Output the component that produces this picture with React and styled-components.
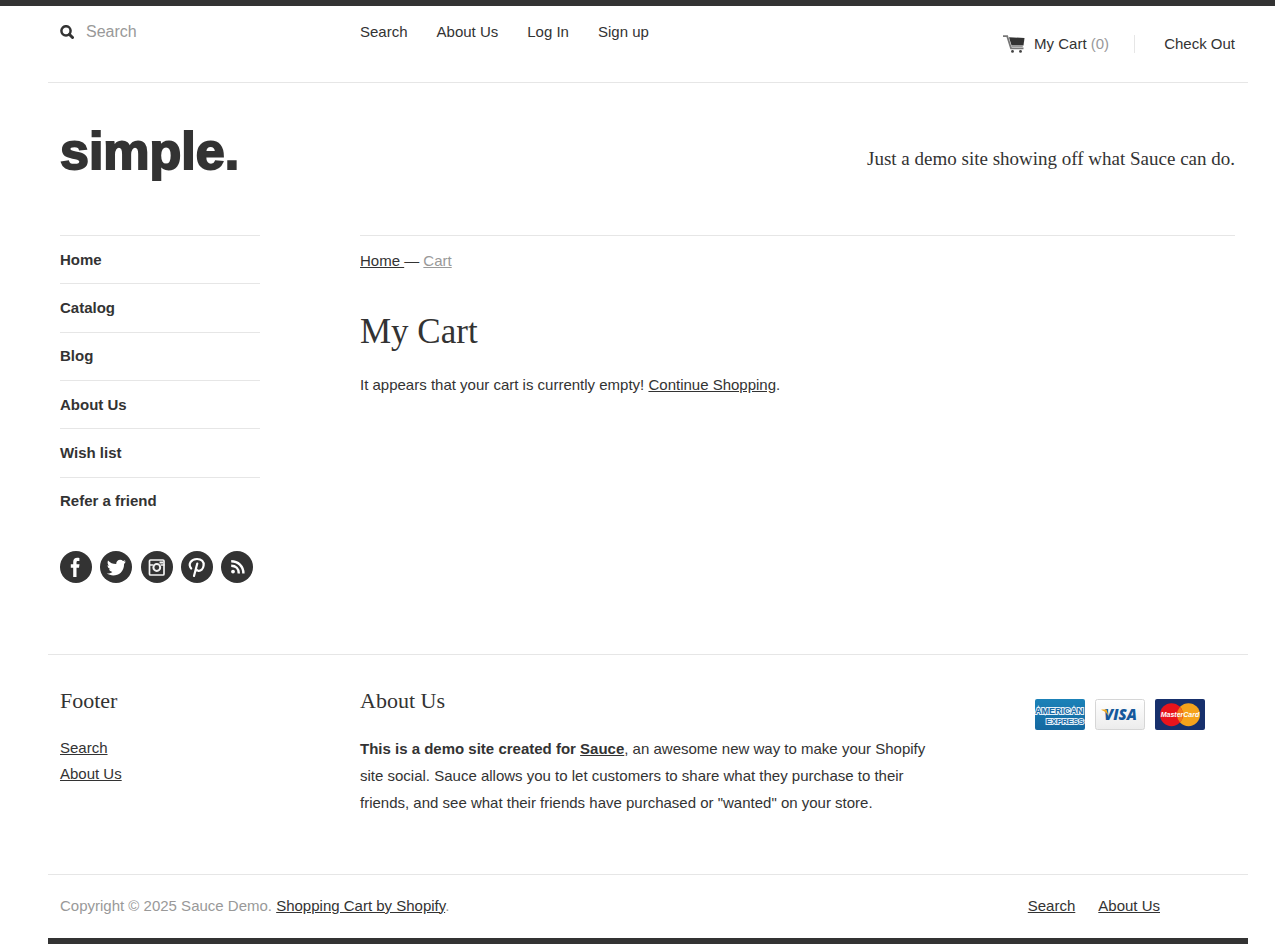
import React from 'react';
import styled, { createGlobalStyle } from 'styled-components';

const dark = '#333';
const muted = '#999';
const rule = '#e6e6e6';
const sans = '"Liberation Sans", Arial, sans-serif';
const serif = '"Liberation Serif", "Times New Roman", serif';

const GlobalStyle = createGlobalStyle`
  *, *::before, *::after { box-sizing: border-box; }
  body {
    margin: 0;
    background: #fff;
    color: ${dark};
    font: 15px/20px ${sans};
    border-top: 6px solid ${dark};
  }
  h1, h2, p, ul { margin: 0; padding: 0; font-weight: normal; }
  ul { list-style: none; }
`;

const Page = styled.div`
  padding: 0 27px 0 48px;
`;

const TopBar = styled.div`
  display: grid;
  grid-template-columns: 300px 1fr auto;
  align-items: start;
  min-height: 77px;
  padding: 16px 13px 0 12px;
  border-bottom: 1px solid ${rule};
`;

const SearchForm = styled.form`
  display: flex;
  align-items: center;
  gap: 12px;
`;

const IconButton = styled.button`
  display: block;
  width: 14px;
  height: 14px;
  padding: 0;
  border: 0;
  background: none;
  cursor: pointer;
  svg { display: block; }
`;

const SearchInput = styled.input`
  width: 160px;
  height: 20px;
  padding: 0;
  border: 0;
  outline: 0;
  background: none;
  color: ${dark};
  font: 16px/20px ${sans};
  &::placeholder { color: ${muted}; opacity: 1; }
`;

const TopNav = styled.nav`
  display: flex;
  gap: 29px;
`;

const Link = styled.a`
  color: ${(p) => (p.$muted ? muted : dark)};
  text-decoration: ${(p) => (p.$plain ? 'none' : 'underline')};
`;

const CartLinks = styled.div`
  display: flex;
  align-items: center;
  padding-top: 12px;
`;

const CartLink = styled(Link)`
  display: flex;
  align-items: center;
  gap: 9px;
  svg { display: block; }
`;

const Count = styled.span`
  color: ${muted};
`;

const Divider = styled.span`
  width: 1px;
  height: 18px;
  margin: 0 29px 0 25px;
  background: ${rule};
`;

const Masthead = styled.header`
  display: flex;
  align-items: center;
  justify-content: space-between;
  min-height: 152px;
  padding: 0 13px 0 12px;
`;

const Logo = styled.a`
  color: ${dark};
  font: bold 52px/64px ${sans};
  -webkit-text-stroke: 2px ${dark};
  text-decoration: none;
  padding-bottom: 16px;
`;

const Tagline = styled.p`
  font: 19px/24px ${serif};
`;

const Columns = styled.div`
  display: grid;
  grid-template-columns: 200px 1fr;
  column-gap: 100px;
  padding: 0 13px 71px 12px;
`;

const SideNav = styled.ul`
  display: grid;
  grid-auto-rows: 1fr;
  min-height: 290px;
`;

const SideItem = styled.li`
  display: flex;
  align-items: center;
  border-top: 1px solid ${rule};
  font-weight: bold;
`;

const Social = styled.div`
  display: flex;
  justify-content: space-between;
  width: 193px;
  margin-top: 26px;
  svg { display: block; }
`;

const Main = styled.main`
  padding-top: 15px;
  border-top: 1px solid ${rule};
`;

const Title = styled.h1`
  margin: 41px 0 23px;
  font: 35px/40px ${serif};
`;

const Footer = styled.footer`
  border-top: 1px solid ${rule};
  border-bottom: 6px solid ${dark};
`;

const FooterColumns = styled.div`
  display: grid;
  grid-template-columns: 300px 1fr 200px;
  padding: 33px 13px 58px 12px;
  border-bottom: 1px solid ${rule};
`;

const FooterTitle = styled.h2`
  margin-bottom: 21px;
  font: 22px/26px ${serif};
`;

const FooterList = styled.ul`
  line-height: 26px;
`;

const About = styled.section`
  padding-right: 100px;
`;

const AboutText = styled.p`
  line-height: 27px;
`;

const Cards = styled.div`
  display: flex;
  gap: 10px;
  padding-top: 11px;
  svg { display: block; }
`;

const Bottom = styled.div`
  display: flex;
  align-items: center;
  justify-content: space-between;
  min-height: 63px;
  padding: 0 88px 2px 12px;
  color: ${muted};
`;

const BottomNav = styled.nav`
  display: flex;
  gap: 23px;
`;

const socials = [
  {
    name: 'Facebook',
    art: <path fill="#fff" d="M13.200 26v-9.300h-2.400v-3.400h2.400v-2.500c0-2.700 1.600-4.100 4-4.100 1 0 2 .1 2.200.2v3.200h-1.500c-1.200 0-1.400.6-1.400 1.400v1.800h3l-.5 3.400h-2.500V26z" />,
  },
  {
    name: 'Twitter',
    art: <path fill="#fff" d="M25.800 10.500l-2 .6c.8-.5 1.200-1 1.500-1.900l-2.300.8c-.8-.8-1.700-1.200-2.800-1.200-2.300 0-4 1.900-4 4.200-3.500 0-6-1.300-8.200-3.600-.8 2-.4 4 1.100 5.300l-1.600-.4c0 1.900 1.200 3.400 3 3.900l-1.600.1c.6 1.500 1.900 2.500 3.500 2.600-1.700 1.300-3.500 1.800-5.600 1.700 6.700 4.200 17.300 1.200 17.300-9.700.7-.6 1.300-1.400 1.700-2.400z" />,
  },
  {
    name: 'Instagram',
    art: (
      <g fill="none" stroke="#f2f2f2">
        <rect x="8.500" y="9" width="14.500" height="15" rx="1" strokeWidth="1.700" />
        <path d="M8.500 14h4m7 0h4" strokeWidth="1.500" />
        <circle cx="15.800" cy="16.500" r="3.400" strokeWidth="2" />
        <path d="M18.500 11.500h3.500" strokeWidth="2" />
      </g>
    ),
  },
  {
    name: 'Pinterest',
    art: (
      <path
        fill="none"
        stroke="#fff"
        strokeWidth="2.200"
        strokeLinecap="round"
        strokeLinejoin="round"
        d="M10.200 17.500c-3.600-4.500-.1-9.500 5.800-9.500 4.500 0 7.200 2.700 6.600 6.500-.5 3.700-2.900 5.600-5.200 5.300-1.300-.2-2-.9-2.400-1.700M16.300 12.500L13 25"
      />
    ),
  },
  {
    name: 'RSS',
    art: (
      <g fill="none" stroke="#fff" strokeWidth="2.400">
        <circle cx="12" cy="20.600" r="1.900" fill="#fff" stroke="none" />
        <path d="M10.200 14.800c4.600 0 7.600 3 7.600 7.600M10.200 10.300c7 0 12.200 5.100 12.200 12.100" />
      </g>
    ),
  },
];

const SearchIcon = () => (
  <svg width="14" height="14" viewBox="0 0 14 14" fill="none" stroke={dark} aria-hidden="true">
    <circle cx="6" cy="5.800" r="4.600" strokeWidth="2.500" />
    <path d="M9.500 9.500l3 3" strokeWidth="3" strokeLinecap="round" />
  </svg>
);

const CartIcon = () => (
  <svg width="22" height="18" viewBox="0 0 22 18" aria-hidden="true">
    <path d="M0 1.200h4.200L8 13.300h12.500" fill="none" stroke="#777" strokeWidth="1.800" />
    <path d="M6 2.200l15.500.9-1 7.300H8.500z" fill={dark} />
    <path d="M8.300 11.200h11.500" stroke="#999" strokeWidth="1.600" />
    <circle cx="9.500" cy="16.400" r="1.400" fill="#444" />
    <circle cx="17.500" cy="16.400" r="1.400" fill="#444" />
  </svg>
);

const Amex = () => (
  <svg width="50" height="31" viewBox="0 0 50 31" role="img" aria-label="American Express">
    <defs>
      <linearGradient id="amex" x2="0" y2="1">
        <stop offset="0" stopColor="#1b82b8" />
        <stop offset="1" stopColor="#1568a0" />
      </linearGradient>
    </defs>
    <rect width="50" height="31" rx="2" fill="url(#amex)" />
    <g fontFamily={sans} fontWeight="bold" fill="#1769a5" stroke="#e3f0f8" strokeWidth="2" paintOrder="stroke">
      <text x="0" y="15" fontSize="9">AMERICAN</text>
      <text x="11" y="25" fontSize="8">EXPRESS</text>
    </g>
  </svg>
);

const Visa = () => (
  <svg width="50" height="31" viewBox="0 0 50 31" role="img" aria-label="Visa">
    <defs>
      <linearGradient id="visa" x2="0" y2="1">
        <stop offset="0" stopColor="#fff" />
        <stop offset="1" stopColor="#ececec" />
      </linearGradient>
    </defs>
    <rect x=".5" y=".5" width="49" height="30" rx="2" fill="url(#visa)" stroke="#d6d6d6" />
    <text x="9" y="21" fontFamily={`"Open Sans", ${sans}`} fontWeight="800" fontStyle="italic" fontSize="15" fill="#15599c">VISA</text>
    <path d="M6.500 10.500h5l2 6.500C12 14.200 9.500 12 6.500 11z" fill="#f0ac21" />
  </svg>
);

const MasterCard = () => (
  <svg width="50" height="31" viewBox="0 0 50 31" role="img" aria-label="MasterCard">
    <rect width="50" height="31" rx="2" fill="#17306c" />
    <circle cx="33.500" cy="15.700" r="11.500" fill="#f5a31c" />
    <circle cx="16.500" cy="15.700" r="11.500" fill="#e8141c" />
    <path d="M25 7.950a11.500 11.500 0 0 1 0 15.500 11.500 11.500 0 0 1 0-15.500z" fill="#f07a1c" />
    <text x="25" y="18" textAnchor="middle" fontFamily={sans} fontWeight="bold" fontStyle="italic" fontSize="7" fill="#fff">MasterCard</text>
  </svg>
);

const sideLinks = ['Home', 'Catalog', 'Blog', 'About Us', 'Wish list', 'Refer a friend'];

export default function App() {
  return (
    <>
      <GlobalStyle />
      <Page>
        <TopBar>
          <SearchForm role="search" onSubmit={(e) => e.preventDefault()}>
            <IconButton type="submit" aria-label="Submit search"><SearchIcon /></IconButton>
            <SearchInput type="text" placeholder="Search" aria-label="Search" />
          </SearchForm>
          <TopNav>
            {['Search', 'About Us', 'Log In', 'Sign up'].map((t) => (
              <Link key={t} href="#" $plain>{t}</Link>
            ))}
          </TopNav>
          <CartLinks>
            <CartLink href="#" $plain>
              <CartIcon />
              <span>My Cart <Count>(0)</Count></span>
            </CartLink>
            <Divider />
            <Link href="#" $plain>Check Out</Link>
          </CartLinks>
        </TopBar>

        <Masthead>
          <Logo href="#">simple.</Logo>
          <Tagline>Just a demo site showing off what Sauce can do.</Tagline>
        </Masthead>

        <Columns>
          <aside>
            <nav>
              <SideNav>
                {sideLinks.map((t) => (
                  <SideItem key={t}><Link href="#" $plain>{t}</Link></SideItem>
                ))}
              </SideNav>
            </nav>
            <Social>
              {socials.map(({ name, art }) => (
                <a key={name} href="#" aria-label={name}>
                  <svg width="32" height="32" viewBox="0 0 32 32" aria-hidden="true">
                    <circle cx="16" cy="16" r="16" fill={dark} />
                    {art}
                  </svg>
                </a>
              ))}
            </Social>
          </aside>
          <Main>
            <div>
              <Link href="#">Home </Link>— <Link href="#" $muted>Cart</Link>
            </div>
            <Title>My Cart</Title>
            <p>It appears that your cart is currently empty! <Link href="#">Continue Shopping</Link>.</p>
          </Main>
        </Columns>

        <Footer>
          <FooterColumns>
            <section>
              <FooterTitle>Footer</FooterTitle>
              <FooterList>
                <li><Link href="#">Search</Link></li>
                <li><Link href="#">About Us</Link></li>
              </FooterList>
            </section>
            <About>
              <FooterTitle>About Us</FooterTitle>
              <AboutText>
                <strong>This is a demo site created for <Link href="#">Sauce</Link></strong>, an awesome new way to
                make your Shopify site social. Sauce allows you to let customers to share what they purchase to their
                friends, and see what their friends have purchased or "wanted" on your store.
              </AboutText>
            </About>
            <Cards>
              <Amex />
              <Visa />
              <MasterCard />
            </Cards>
          </FooterColumns>
          <Bottom>
            <p>Copyright © 2025 Sauce Demo. <Link href="#">Shopping Cart by Shopify</Link>.</p>
            <BottomNav>
              <Link href="#">Search</Link>
              <Link href="#">About Us</Link>
            </BottomNav>
          </Bottom>
        </Footer>
      </Page>
    </>
  );
}
